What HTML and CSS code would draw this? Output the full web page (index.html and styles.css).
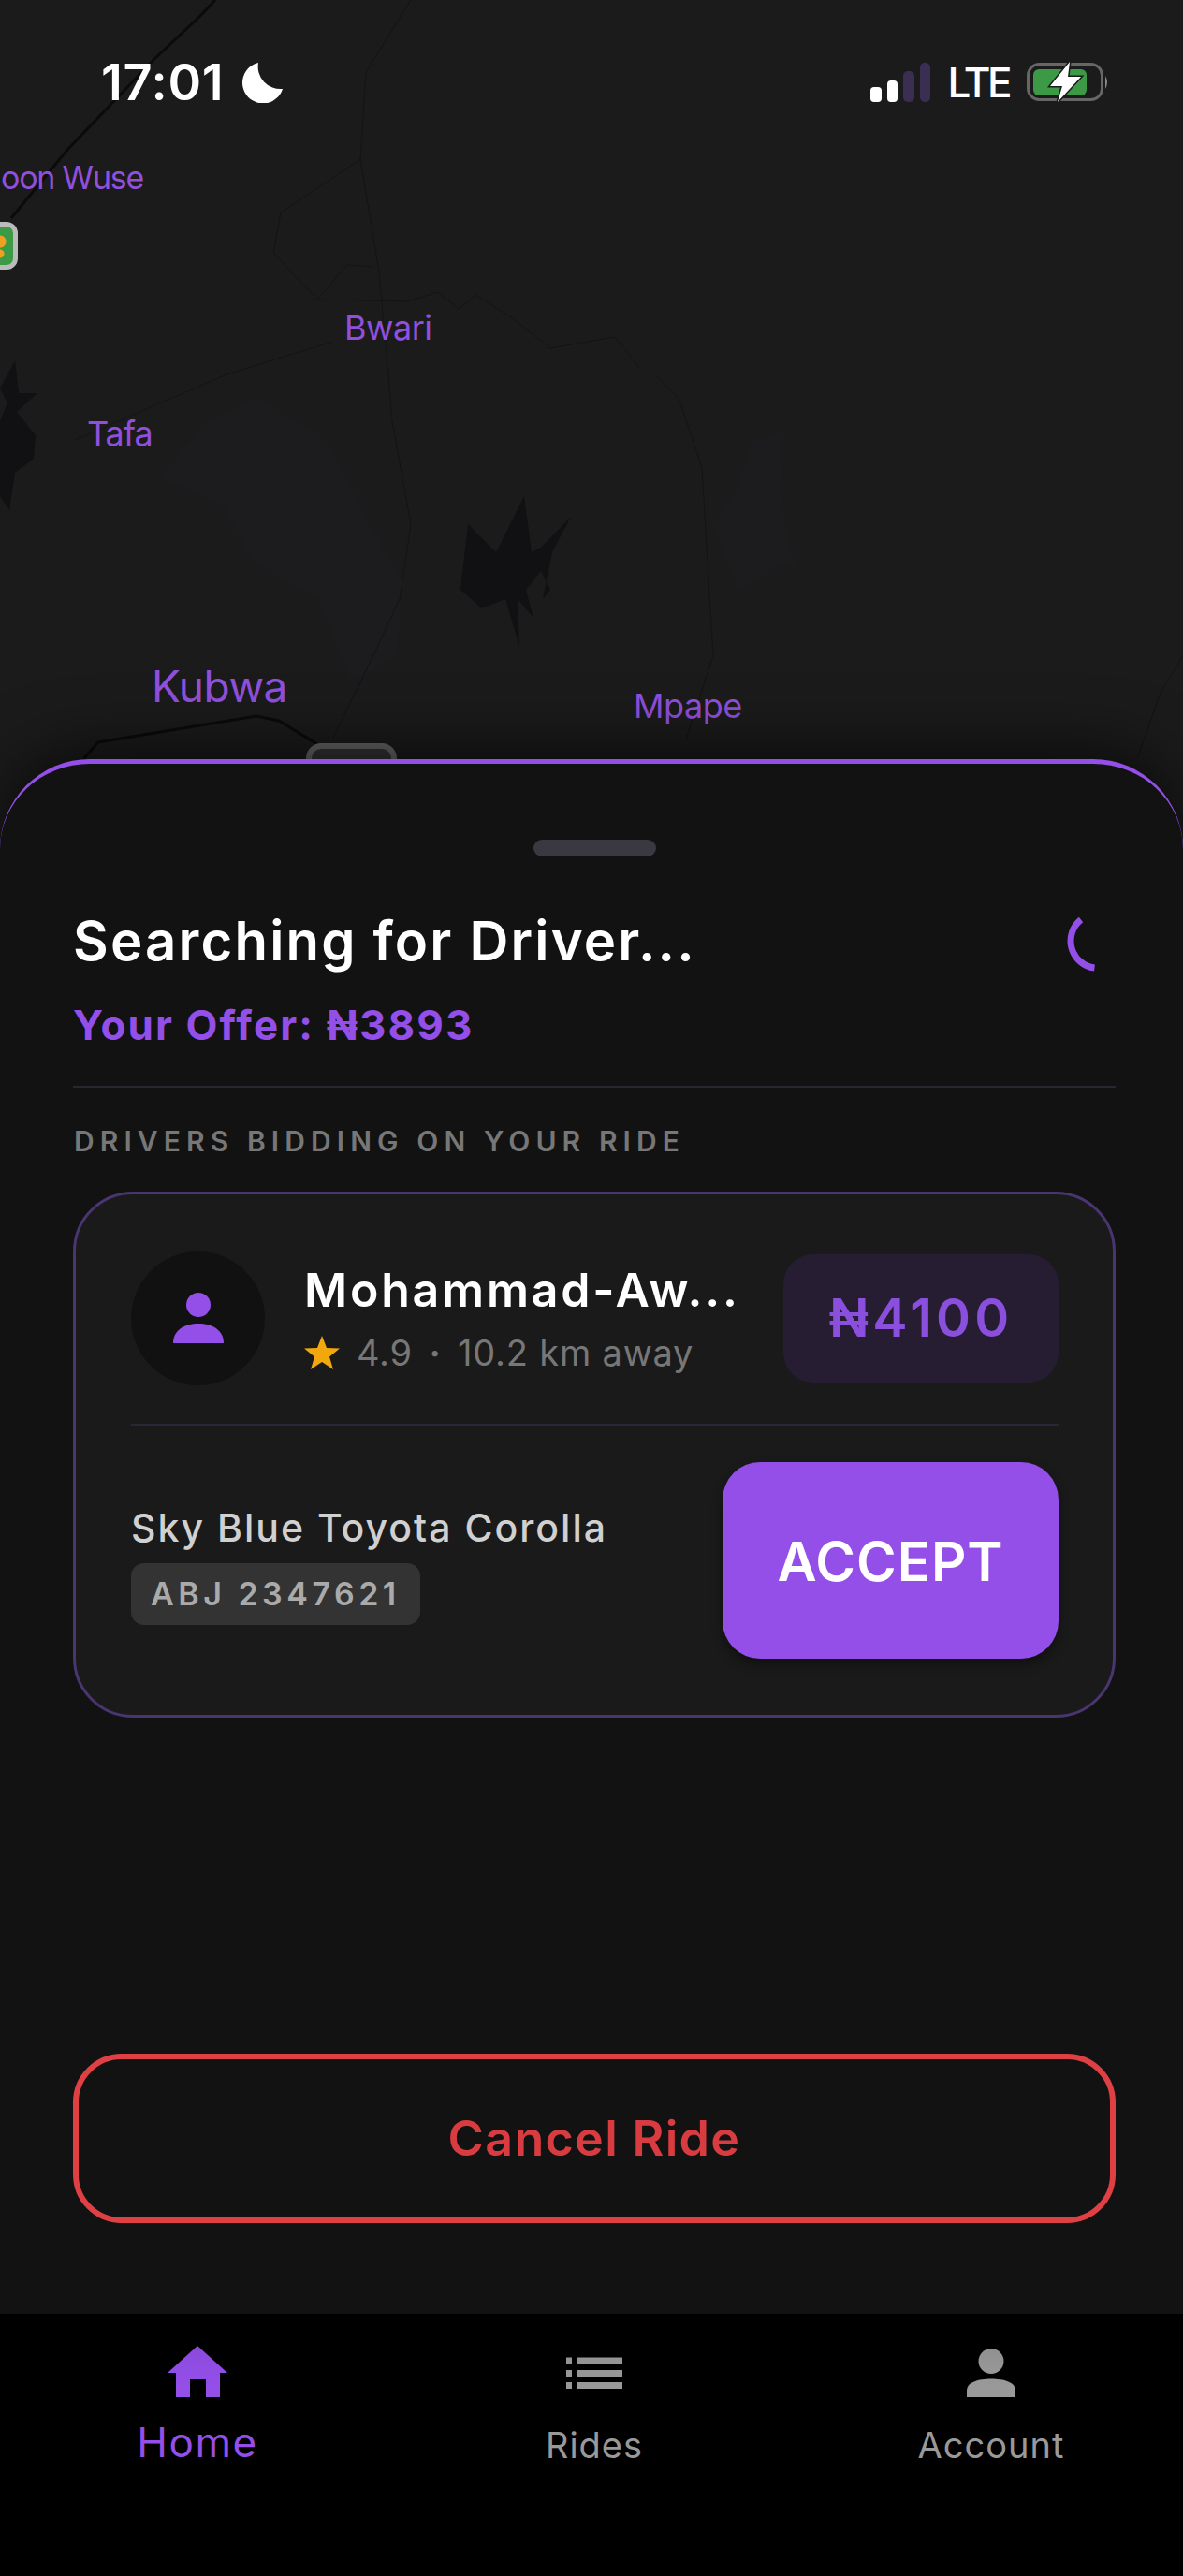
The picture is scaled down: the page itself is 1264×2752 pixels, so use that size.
FILE: index.html
```html
<!DOCTYPE html>
<html lang="en">
<head>
  <meta charset="UTF-8">
  <meta name="viewport" content="width=device-width, initial-scale=1.0">
  <title>Searching for Driver</title>
  <link rel="stylesheet" href="styles.css">
</head>
<body>
  <div class="app-container">
    <div class="map">
      <svg class="map-lines" width="1264" height="920" viewBox="0 0 1264 920">
        <path class="map-patch" d="M220 450 L275 425 L350 470 L395 560 L430 620 L425 700 L375 730 L340 640 L270 600 L240 540 L170 510Z"/>
        <path class="map-patch" d="M805 470 L835 465 L838 560 L855 620 L840 600 L790 630 L760 560 L785 530Z"/>
        <path class="map-thin" d="M439 0 L391 77 L385 170 L405 290 L415 400 L419 450 L439 560 L427 640 L399 700 L355 790"/>
        <path class="map-thin" d="M385 170 L300 227 L292 270 L339 320 L371 283 L400 285"/>
        <path class="map-thin" d="M339 320 L435 322 L468 312 L490 330 L508 315 L548 340 L588 372 L657 360 L685 395"/>
        <path class="map-thin" d="M355 365 L242 400 L80 470"/>
        <path class="map-thin" d="M700 400 L725 425 L750 500 L762 700 L733 790"/>
        <path class="map-thin" d="M1264 700 L1240 740 L1215 810"/>
        <path class="map-road" d="M230 0 L214 17 L165 63 L72 160 L12 233"/>
        <path class="map-road" d="M89 811 L105 793 L274 765 L298 770 L339 795"/>
        <path class="map-water" d="M560 530 L568 590 L578 585 L610 552 L590 590 L580 640 L588 630 L578 610 L562 630 L570 660 L553 640 L555 690 L540 640 L515 650 L492 630 L500 560 L530 590 L545 560Z"/>
        <path class="map-water" d="M16 385 L20 420 L40 420 L18 440 L38 465 L36 490 L16 505 L10 545 L0 530 L0 450 L8 430 L0 415Z"/>
      </svg>

      <span class="map-label label-wuse">oon Wuse</span>
      <span class="map-label label-bwari">Bwari</span>
      <span class="map-label label-tafa">Tafa</span>
      <span class="map-label label-kubwa">Kubwa</span>
      <span class="map-label label-mpape">Mpape</span>

      <div class="map-shield"></div>
      <div class="map-sign"></div>

      <div class="status-bar">
        <div class="status-left">
          <span class="status-time">17:01</span>
          <svg width="43" height="43" viewBox="0 0 43 43"><path fill="#fff" d="M17 0A22 22 0 1 0 43 28A24 24 0 0 1 17 0Z"/></svg>
        </div>
        <div class="status-right">
          <svg width="64" height="42" viewBox="0 0 64 42">
            <rect x="0" y="26" width="12" height="16" rx="4" fill="#fff"/>
            <rect x="18" y="19" width="11" height="23" rx="4" fill="#fff"/>
            <rect x="35" y="9" width="12" height="33" rx="5" fill="#3a2f52"/>
            <rect x="53" y="0" width="11" height="42" rx="5" fill="#3a2f52"/>
          </svg>
          <span class="status-lte">LTE</span>
          <svg width="88" height="44" viewBox="0 0 88 44">
            <rect x="1.5" y="2.500" width="79" height="38" rx="12" fill="none" stroke="#666" stroke-width="3"/>
            <rect x="7" y="8" width="57" height="28" rx="6" fill="#3c9a47"/>
            <path d="M84 15 Q88 22 84 29Z" fill="#888"/>
            <path d="M46 0 L25 26 L38 26 L33 43 L58 16 L44 16Z" fill="#fff" stroke="#1b1b1b" stroke-width="3" paint-order="stroke"/>
          </svg>
        </div>
      </div>
    </div>

    <div class="sheet">
      <div class="handle"></div>

      <div class="title-row">
        <h1>Searching for Driver...</h1>
        <svg width="70" height="70" viewBox="0 0 70 70"><path class="spinner" d="M33 12.500A29 29 0 0 0 47.500 64"/></svg>
      </div>
      <p class="offer">Your Offer: ₦3893</p>
      <div class="divider"></div>
      <h2>DRIVERS BIDDING ON YOUR RIDE</h2>

      <div class="bid-card">
        <div class="bid-top">
          <div class="avatar">
            <svg width="54" height="54" viewBox="0 0 54 54">
              <circle cx="27" cy="13" r="13" fill="#934fe8"/>
              <path d="M0 54 C0 40 12 33 27 33 C42 33 54 40 54 54Z" fill="#934fe8"/>
            </svg>
          </div>
          <div class="driver-info">
            <div class="driver-name">Mohammad-Aw...</div>
            <div class="driver-meta">
              <svg width="38" height="36" viewBox="0 0 38 36"><path fill="#f0a80e" d="M19 0 L24 13 L38 13.500 L27 22.500 L31 36 L19 28 L7 36 L11 22.500 L0 13.500 L14 13Z"/></svg>
              <span>4.9</span><span class="meta-dot">•</span><span>10.2 km away</span>
            </div>
          </div>
          <div class="bid-price">₦4100</div>
        </div>

        <div class="card-divider"></div>

        <div class="bid-bottom">
          <div class="car-info">
            <div class="car-name">Sky Blue Toyota Corolla</div>
            <div class="car-plate">ABJ 2347621</div>
          </div>
          <button class="accept-btn">ACCEPT</button>
        </div>
      </div>

      <button class="cancel-btn">Cancel Ride</button>
    </div>

    <nav class="bottom-nav">
      <div class="nav-item active">
        <svg width="64" height="55" viewBox="0 0 64 55"><path fill="#934fe8" d="M32 0 L64 29 L56 29 L56 55 L41 55 L41 36 L24 36 L24 55 L9 55 L9 29 L0 29Z"/></svg>
        <span>Home</span>
      </div>
      <div class="nav-item">
        <svg width="60" height="55" viewBox="0 0 60 55">
          <g fill="#999">
            <rect x="0" y="12.500" width="6" height="7"/><rect x="12" y="12.500" width="48" height="7"/>
            <rect x="0" y="26" width="6" height="7"/><rect x="12" y="26" width="48" height="7"/>
            <rect x="0" y="39" width="6" height="7"/><rect x="12" y="39" width="48" height="7"/>
          </g>
        </svg>
        <span>Rides</span>
      </div>
      <div class="nav-item">
        <svg width="52" height="55" viewBox="0 0 52 55">
          <circle cx="26" cy="16.500" r="13.500" fill="#999"/>
          <path d="M0 55 L0 48 C0 39 12 35.500 26 35.500 C40 35.500 52 39 52 48 L52 55Z" fill="#999"/>
        </svg>
        <span>Account</span>
      </div>
    </nav>
  </div>
</body>
</html>
```

FILE: styles.css
```css
body {
  margin: 0;
  background-color: #000;
  font-family: 'Inter', 'Noto Sans', sans-serif;
}

.app-container {
  width: 1264px;
  height: 2752px;
  display: flex;
  flex-direction: column;
  overflow: hidden;
  background-color: #000;
}

/* Map area */
.map {
  position: relative;
  flex: 0 0 920px;
  background-color: #1b1b1b;
  overflow: hidden;
}

.map-lines {
  position: absolute;
  left: 0;
  top: 0;
}

.map-patch {
  fill: #1c1c1e;
}

.map-thin {
  fill: none;
  stroke: #141414;
  stroke-width: 1;
}

.map-road {
  fill: none;
  stroke: #0b0b0e;
  stroke-width: 3;
}

.map-water {
  fill: #111113;
}

.map-label {
  position: absolute;
  color: #9050dd;
  font-size: 36px;
  line-height: 1;
  letter-spacing: -0.5px;
  white-space: nowrap;
}

.label-wuse { left: 1px; top: 173px; font-size: 34px; letter-spacing: -1.200px; }
.label-bwari { left: 368px; top: 332px; }
.label-tafa { left: 93px; top: 445px; letter-spacing: -1px; }
.label-kubwa { left: 162px; top: 710px; font-size: 46px; }
.label-mpape { left: 677px; top: 736px; }

.map-shield {
  position: absolute;
  left: -20px;
  top: 237px;
  width: 29px;
  height: 41px;
  background: radial-gradient(circle at 15px 16px, #f0a020 6px, transparent 7px),
    radial-gradient(circle at 15px 29px, #f0a020 4px, transparent 5px),
    #3c9a47;
  border: 5px solid #bbb;
  border-radius: 12px;
}

.map-sign {
  position: absolute;
  left: 327px;
  top: 794px;
  width: 85px;
  height: 40px;
  background-color: #333;
  border: 6px solid #666;
  border-radius: 16px;
}

.status-bar {
  position: relative;
  display: flex;
  justify-content: space-between;
  padding: 56px 79px 0 108px;
}

.status-left,
.status-right {
  display: flex;
  align-items: center;
  height: 64px;
}

.status-left {
  gap: 20px;
}

.status-right {
  gap: 19px;
}

.status-time {
  color: #fff;
  font-size: 54px;
  font-weight: 600;
  line-height: 64px;
  letter-spacing: 0.7px;
}

.status-lte {
  color: #fff;
  font-size: 44px;
  font-weight: 500;
  line-height: 64px;
  letter-spacing: -3.500px;
}

/* Bottom sheet */
.sheet {
  position: relative;
  flex: 1;
  display: flex;
  flex-direction: column;
  margin-top: -109px;
  padding: 81px 72px 97px 78px;
  background-color: #121213;
  border-top: 5px solid #934fe8;
  border-radius: 96px 96px 0 0;
  box-shadow: 0 -8px 70px rgba(0, 0, 0, 0.65);
}

.handle {
  align-self: center;
  width: 131px;
  height: 18px;
  background-color: #3a3840;
  border-radius: 9px;
}

.title-row {
  display: flex;
  justify-content: space-between;
  margin-top: 55px;
}

h1 {
  margin: 0;
  color: #fff;
  font-size: 58px;
  font-weight: 600;
  line-height: 70px;
  letter-spacing: 2.200px;
}

.spinner {
  fill: none;
  stroke: #934fe8;
  stroke-width: 7;
}

.offer {
  margin: 28px 0 0;
  color: #934fe8;
  font-size: 44px;
  font-weight: 700;
  line-height: 54px;
  letter-spacing: 2.100px;
}

.divider {
  height: 2px;
  margin-top: 38px;
  background-color: #2a2433;
}

h2 {
  margin: 39px 0 0 1px;
  color: #777;
  font-size: 30px;
  font-weight: 600;
  line-height: 36px;
  letter-spacing: 6.100px;
}

/* Driver bid */
.bid-card {
  margin-top: 36px;
  padding: 60px 58px 60px 59px;
  background-color: #1a1a1a;
  border: 3px solid #4a3570;
  border-radius: 64px;
}

.bid-top {
  display: flex;
  align-items: center;
  height: 144px;
}

.avatar {
  flex: 0 0 143px;
  height: 143px;
  display: flex;
  align-items: center;
  justify-content: center;
  background-color: #111;
  border-radius: 50%;
}

.driver-info {
  flex: 1;
  margin-left: 42px;
}

.driver-name {
  color: #fff;
  font-size: 50px;
  font-weight: 600;
  line-height: 60px;
  letter-spacing: 2.800px;
  white-space: nowrap;
}

.driver-meta {
  display: flex;
  align-items: center;
  gap: 18px;
  margin-top: 14px;
  color: #777;
  font-size: 38px;
  line-height: 46px;
  letter-spacing: 0.8px;
}

.meta-dot {
  font-size: 20px;
}

.bid-price {
  flex: 0 0 294px;
  height: 137px;
  display: flex;
  align-items: center;
  justify-content: center;
  color: #8a4fdc;
  background-color: #261d33;
  border-radius: 32px;
  font-size: 56px;
  font-weight: 600;
  letter-spacing: 4.300px;
}

.card-divider {
  height: 2px;
  margin-top: 41px;
  background-color: #2c2638;
}

.bid-bottom {
  display: flex;
  align-items: center;
  justify-content: space-between;
  margin-top: 39px;
}

.car-info {
  padding-top: 10px;
}

.car-name {
  color: #d0d0d0;
  font-size: 41px;
  font-weight: 500;
  line-height: 48px;
  letter-spacing: 2px;
}

.car-plate {
  display: inline-block;
  margin-top: 14px;
  padding: 0 21px;
  color: #aaa;
  background-color: #333;
  border-radius: 14px;
  font-size: 34px;
  font-weight: 600;
  line-height: 66px;
  letter-spacing: 4.500px;
}

button {
  font-family: inherit;
  cursor: pointer;
}

.accept-btn {
  width: 359px;
  height: 210px;
  padding: 2px 0 0;
  color: #fff;
  background-color: #934fe8;
  border: none;
  border-radius: 40px;
  box-shadow: 0 6px 12px rgba(0, 0, 0, 0.4);
  font-size: 58px;
  font-weight: 600;
  letter-spacing: 1px;
}

.cancel-btn {
  height: 181px;
  margin-top: auto;
  color: #d93c40;
  background-color: transparent;
  border: 6px solid #df4044;
  border-radius: 52px;
  font-size: 52px;
  font-weight: 600;
  letter-spacing: 1.300px;
}

/* Bottom navigation */
.bottom-nav {
  flex: 0 0 280px;
  display: grid;
  grid-template-columns: repeat(3, 424px);
  margin-left: -1px;
  padding-top: 34px;
  box-sizing: border-box;
  background-color: #000;
}

.nav-item {
  display: flex;
  flex-direction: column;
  align-items: center;
  color: #999;
  font-size: 38px;
  line-height: 54px;
  letter-spacing: 1px;
}

.nav-item span {
  margin-top: 24px;
}

.nav-item.active {
  color: #934fe8;
  font-size: 44px;
  letter-spacing: 1.600px;
}

.nav-item.active span {
  margin-top: 21px;
}
```
